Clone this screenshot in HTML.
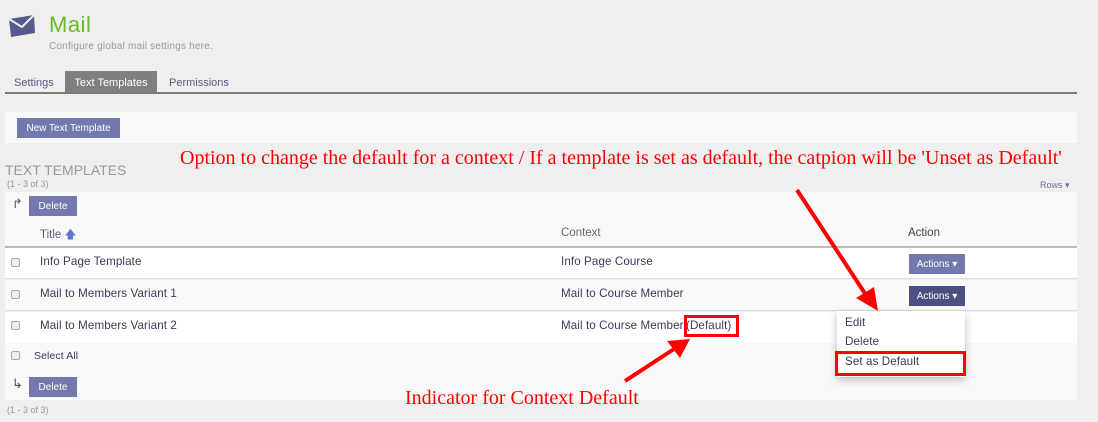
<!DOCTYPE html>
<html><head><meta charset="utf-8"><style>
*{margin:0;padding:0;box-sizing:border-box}
body{width:1098px;height:422px;background:#efefef;font-family:"Liberation Sans",sans-serif;position:relative;overflow:hidden;color:#333}
.a{position:absolute;white-space:nowrap}
.btn{position:absolute;background:#7479ad;color:#fff;font-size:10px;text-align:center}
.cb{position:absolute;width:9px;height:9px;border:1px solid #aaa;border-radius:2px;background:#eee}
.t{font-size:11.6px;color:#3a3a5a;letter-spacing:0.1px}
</style></head><body>
<svg class="a" style="left:8px;top:14px" width="28" height="24" viewBox="0 0 28 24"><path d="M1 5 L26 1 L27 19 L3 23 Z" fill="#565a8e"/><path d="M1 5 L14 13 L26 1" fill="none" stroke="#efefef" stroke-width="2"/></svg>
<div class="a" style="left:49px;top:12px;font-size:22px;color:#6cb72a;letter-spacing:0.5px">Mail</div>
<div class="a" style="left:49px;top:41px;font-size:10px;color:#999;letter-spacing:0.2px">Configure global mail settings here.</div>
<div class="a" style="left:14px;top:77px;font-size:11px;color:#555a88">Settings</div>
<div class="a" style="left:65px;top:71px;width:92px;height:22px;background:#7f7f7f;color:#fff;font-size:11px;text-align:center;line-height:24px">Text Templates</div>
<div class="a" style="left:169px;top:77px;font-size:11px;color:#555a88">Permissions</div>
<div class="a" style="left:5px;top:92px;width:1072px;height:2px;background:#7a7a7a"></div>
<div class="a" style="left:5px;top:112px;width:1072px;height:31px;background:#f9f9f9"></div>
<div class="btn" style="left:17px;top:118px;width:103px;height:20px;line-height:21px">New Text Template</div>
<div class="a" style="left:5px;top:162px;font-size:14px;color:#999">TEXT TEMPLATES</div>
<div class="a" style="left:7px;top:179px;font-size:9px;color:#999">(1 - 3 of 3)</div>
<div class="a" style="left:1040px;top:180px;font-size:9px;color:#6a6fa0">Rows ▾</div>
<div class="a" style="left:5px;top:192px;width:1072px;height:56px;background:#f9f9f9"></div>
<div class="a" style="left:12px;top:196px;font-size:13px;color:#555">↱</div>
<div class="btn" style="left:29px;top:196px;width:48px;height:20px;line-height:21px">Delete</div>
<div class="a" style="left:40px;top:227px;font-size:11.5px;color:#555a88">Title <span style="color:#5b7bc8">🡅</span></div>
<div class="a" style="left:561px;top:227px;font-size:11.5px;color:#666">Context</div>
<div class="a" style="left:908px;top:227px;font-size:11.5px;color:#444">Action</div>
<div class="a" style="left:5px;top:246px;width:1072px;height:2px;background:#bbb"></div>
<div class="a" style="left:5px;top:248px;width:1072px;height:31px;background:#fff;border-bottom:1px solid #ddd"></div>
<div class="a" style="left:5px;top:280px;width:1072px;height:31px;background:#f9f9f9;border-bottom:1px solid #ddd"></div>
<div class="a" style="left:5px;top:312px;width:1072px;height:31px;background:#fff"></div>
<div class="a" style="left:5px;top:343px;width:1072px;height:57px;background:#f9f9f9"></div>
<div class="cb" style="left:11px;top:258px"></div>
<div class="cb" style="left:11px;top:290px"></div>
<div class="cb" style="left:11px;top:321px"></div>
<div class="cb" style="left:11px;top:351px"></div>
<div class="a t" style="left:40px;top:255px">Info Page Template</div>
<div class="a t" style="left:40px;top:287px">Mail to Members Variant 1</div>
<div class="a t" style="left:40px;top:319px">Mail to Members Variant 2</div>
<div class="a t" style="left:34px;top:350px;font-size:10.5px">Select All</div>
<div class="a t" style="left:561px;top:255px">Info Page Course</div>
<div class="a t" style="left:561px;top:287px">Mail to Course Member</div>
<div class="a t" style="left:561px;top:319px">Mail to Course Member</div>
<div class="a t" style="left:686px;top:319px">(Default)</div>
<div class="btn" style="left:909px;top:254px;width:56px;height:20px;line-height:21px">Actions ▾</div>
<div class="btn" style="left:909px;top:286px;width:56px;height:20px;line-height:21px;background:#4b5080">Actions ▾</div>
<div class="a" style="left:12px;top:376px;font-size:13px;color:#555">↳</div>
<div class="btn" style="left:29px;top:377px;width:48px;height:20px;line-height:21px">Delete</div>
<div class="a" style="left:7px;top:405px;font-size:9px;color:#999">(1 - 3 of 3)</div>
<div class="a" style="left:837px;top:311px;width:128px;height:66px;background:#fff;box-shadow:0 3px 8px rgba(0,0,0,.25)"></div>
<div class="a t" style="left:845px;top:316px">Edit</div>
<div class="a t" style="left:845px;top:335px">Delete</div>
<div class="a t" style="left:845px;top:355px">Set as Default</div>
<div class="a" style="left:835px;top:351px;width:131px;height:25px;border:3px solid #f00"></div>
<div class="a" style="left:684px;top:315px;width:55px;height:22px;border:3px solid #f00"></div>
<div class="a" style="left:180px;top:147px;font-family:'Liberation Serif',serif;font-size:20px;color:#f00">Option to change the default for a context / If a template is set as default, the catpion will be 'Unset as Default'</div>
<div class="a" style="left:405px;top:387px;font-family:'Liberation Serif',serif;font-size:20px;color:#f00">Indicator for Context Default</div>
<svg class="a" style="left:0;top:0" width="1098" height="422"><line x1="797" y1="190" x2="866" y2="295" stroke="#f00" stroke-width="4"/><polygon points="878,311 856,298 874,287" fill="#f00"/><line x1="625" y1="381" x2="674" y2="349" stroke="#f00" stroke-width="4"/><polygon points="690,339 680,358 667,341" fill="#f00"/></svg>
</body></html>
